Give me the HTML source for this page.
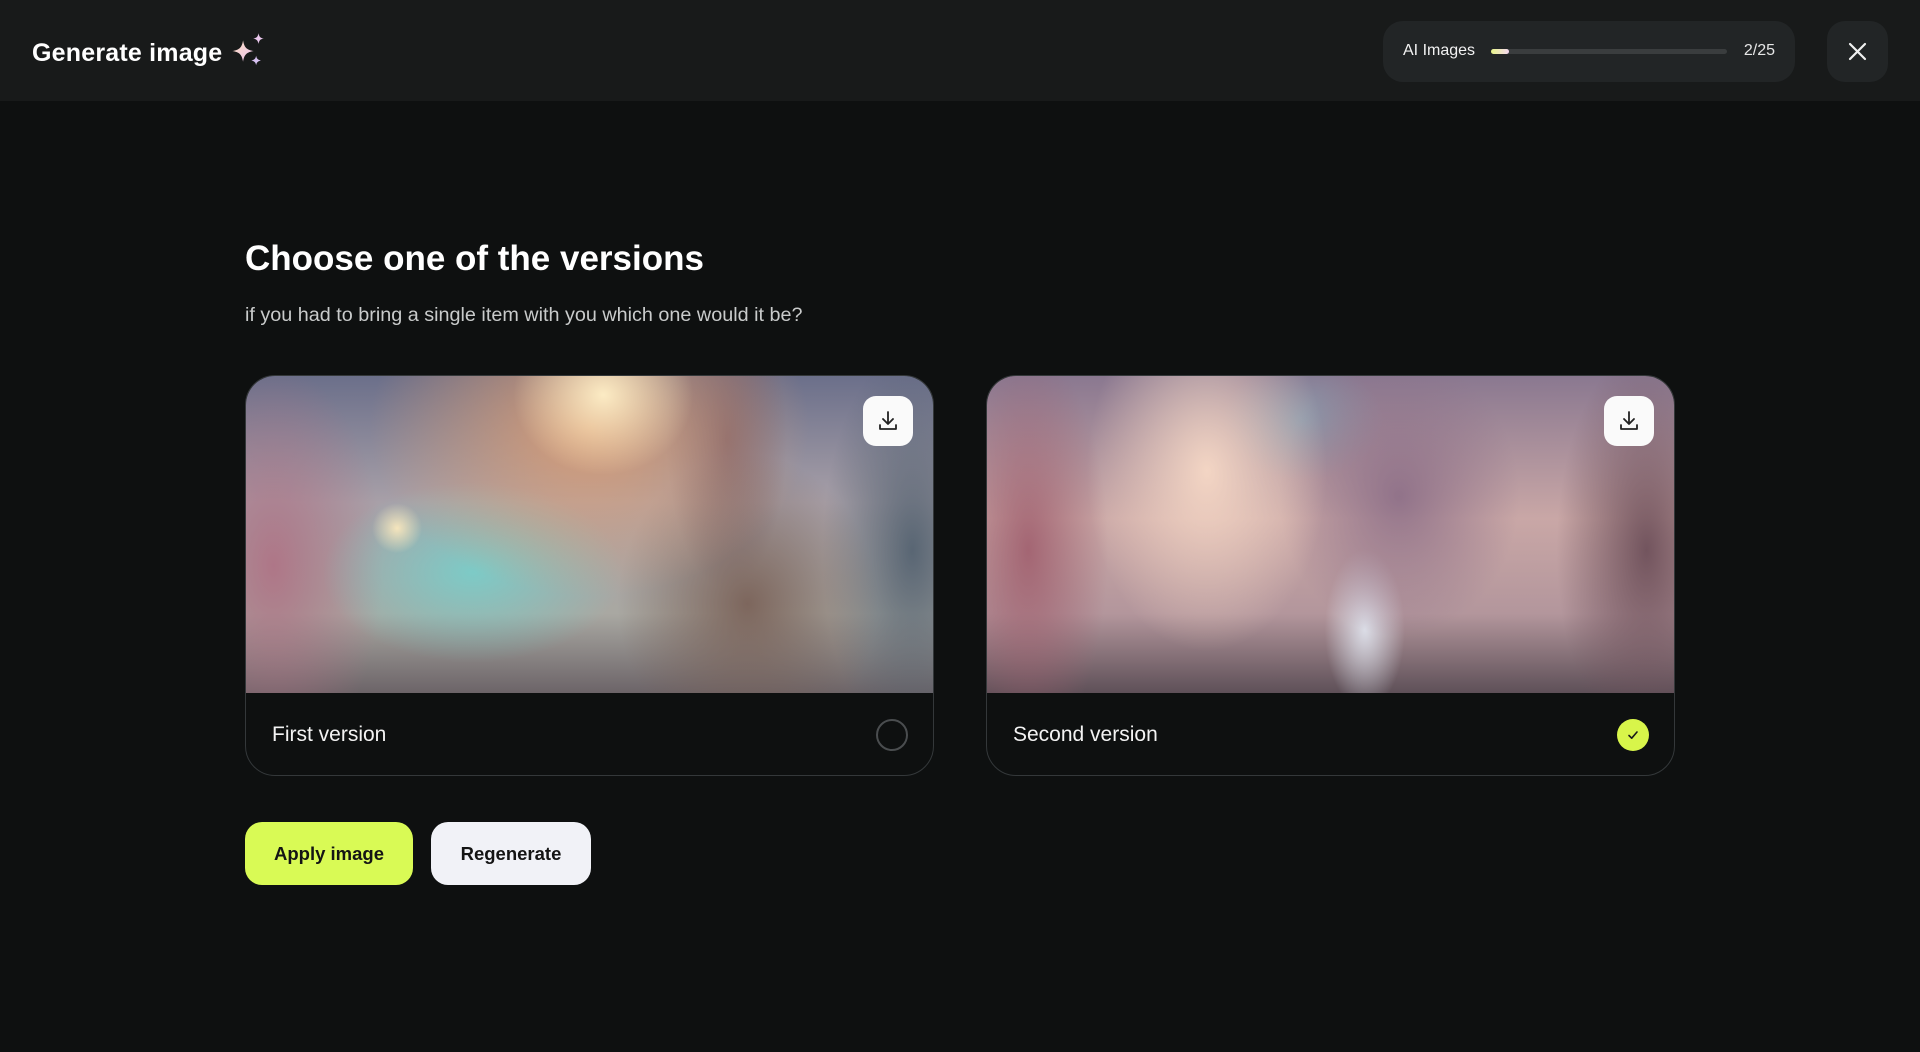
<!DOCTYPE html>
<html><head><meta charset="utf-8">
<style>
*{box-sizing:border-box;margin:0;padding:0}
body{width:1920px;height:1052px;background:#0e1010;font-family:"Liberation Sans",sans-serif;color:#fff;position:relative;overflow:hidden}
.hdr{position:absolute;left:0;top:0;width:1920px;height:101px;background:#181a1a}
.title{position:absolute;left:32px;top:39px;font-size:25px;font-weight:bold;letter-spacing:0.2px}
.spark{position:absolute;left:230px;top:32px}
.pill{position:absolute;left:1383px;top:21px;width:412px;height:61px;border-radius:20px;background:#222526}
.pill .t{position:absolute;left:20px;top:21px;font-size:16px;color:#f2f2f2}
.bar{position:absolute;left:108px;top:28px;width:236px;height:5px;border-radius:3px;background:#3a3d3e}
.bar i{position:absolute;left:0;top:0;width:18px;height:5px;border-radius:3px;background:linear-gradient(90deg,#e8f58a,#f5d8f0)}
.pill .n{position:absolute;right:20px;top:21px;font-size:16px;color:#e6e6e6}
.close{position:absolute;left:1827px;top:21px;width:61px;height:61px;border-radius:18px;background:#222526}
h1{position:absolute;left:245px;top:239px;font-size:35px;font-weight:bold}
.sub{position:absolute;left:245px;top:304px;font-size:19.8px;color:#c9cbcb}
.card{position:absolute;top:375px;width:689px;height:401px;border:1.5px solid #34383a;border-radius:30px;overflow:hidden;background:#0e1010}
.img{position:absolute;left:0;top:0;width:100%;height:317px}
.lbl{position:absolute;left:26px;top:347px;font-size:21px;color:#f3f3f3}
.dl{position:absolute;right:20px;top:20px;width:50px;height:50px;border-radius:13px;background:#fafafa;display:flex;align-items:center;justify-content:center}
.radio{position:absolute;right:25px;top:343px;width:32px;height:32px;border-radius:50%;border:2px solid #4a4d4f}
.chk{position:absolute;right:25px;top:343px;width:32px;height:32px;border-radius:50%;background:#d8f54a;display:flex;align-items:center;justify-content:center}
.btn{position:absolute;top:822px;height:63px;border-radius:17px;font-size:18.5px;font-weight:bold;color:#141414;display:flex;align-items:center;justify-content:center}
</style></head><body>
<div class="hdr">
 <div class="title">Generate image</div>
 <svg class="spark" width="38" height="38" viewBox="0 0 32 32">
  <defs><linearGradient id="g" x1="0" y1="0" x2="1" y2="1"><stop offset="0" stop-color="#ffe0c0"/><stop offset="1" stop-color="#e9c2f0"/></linearGradient></defs>
  <path d="M11 7 C12 13 14 15 20 16 C14 17 12 19 11 25 C10 19 8 17 2 16 C8 15 10 13 11 7Z" fill="url(#g)"/>
  <path d="M24 1 C24.6 4 25.5 5 28.5 5.5 C25.5 6 24.6 7 24 10 C23.4 7 22.5 6 19.5 5.5 C22.5 5 23.4 4 24 1Z" fill="#ebc8ee"/>
  <path d="M22 20 C22.5 22.5 23.3 23.3 26 24 C23.3 24.7 22.5 25.5 22 28 C21.5 25.5 20.7 24.7 18 24 C20.7 23.3 21.5 22.5 22 20Z" fill="#d8c2f2"/>
 </svg>
 <div class="pill"><div class="t">AI Images</div><div class="bar"><i></i></div><div class="n">2/25</div></div>
 <div class="close"><svg width="61" height="61" viewBox="0 0 61 61"><path d="M23 23 L38 38 M38 23 L23 38" stroke="#f0f0f0" stroke-width="2.2" stroke-linecap="round"/></svg></div>
</div>
<h1>Choose one of the versions</h1>
<div class="sub">if you had to bring a single item with you which one would it be?</div>

<div class="card" style="left:245px">
 <div class="img" style="background:
  radial-gradient(ellipse 90px 80px at 52% 6%,rgba(255,240,200,.95),transparent),
  radial-gradient(ellipse 220px 170px at 50% 16%,rgba(230,160,110,.85),transparent),
  radial-gradient(circle 25px at 22% 48%,rgba(255,235,190,.9),transparent),
  radial-gradient(ellipse 150px 90px at 33% 62%,rgba(110,215,210,.75),transparent),
  radial-gradient(ellipse 130px 150px at 73% 72%,rgba(120,95,85,.9),transparent),
  radial-gradient(ellipse 60px 150px at 70% 20%,rgba(110,85,100,.8),transparent),
  radial-gradient(ellipse 110px 200px at 4% 60%,rgba(175,110,130,.85),transparent),
  radial-gradient(ellipse 90px 200px at 97% 55%,rgba(80,95,110,.9),transparent),
  linear-gradient(180deg,#6b6f8a 0%,#a8a0a8 40%,#a9a8a2 75%,#6c6468 100%)"></div>
 <div class="dl"><svg width="24" height="24" viewBox="0 0 24 24" fill="none" stroke="#222" stroke-width="1.8" stroke-linecap="round" stroke-linejoin="round"><path d="M12 3v12M7 10l5 5 5-5M4 16v4h16v-4"/></svg></div>
 <div class="lbl">First version</div>
 <div class="radio"></div>
</div>

<div class="card" style="left:986px">
 <div class="img" style="background:
  radial-gradient(ellipse 120px 180px at 32% 30%,rgba(250,220,200,.9),transparent),
  radial-gradient(ellipse 120px 140px at 60% 38%,rgba(140,110,135,.9),transparent),
  radial-gradient(ellipse 40px 80px at 55% 80%,rgba(225,230,240,.9),transparent),
  radial-gradient(ellipse 80px 200px at 6% 55%,rgba(160,95,110,.9),transparent),
  radial-gradient(ellipse 90px 200px at 96% 55%,rgba(110,80,90,.95),transparent),
  radial-gradient(ellipse 80px 60px at 46% 14%,rgba(120,170,190,.5),transparent),
  linear-gradient(180deg,#8a7890 0%,#c9a7a6 45%,#b3969c 75%,#5e5058 100%)"></div>
 <div class="dl"><svg width="24" height="24" viewBox="0 0 24 24" fill="none" stroke="#222" stroke-width="1.8" stroke-linecap="round" stroke-linejoin="round"><path d="M12 3v12M7 10l5 5 5-5M4 16v4h16v-4"/></svg></div>
 <div class="lbl">Second version</div>
 <div class="chk"><svg width="14" height="14" viewBox="0 0 14 14"><path d="M3 7.5l2.7 2.7L11 4" fill="none" stroke="#1a1a1a" stroke-width="1.6" stroke-linecap="round" stroke-linejoin="round"/></svg></div>
</div>

<div class="btn" style="left:245px;width:168px;background:#d9fa55">Apply image</div>
<div class="btn" style="left:431px;width:160px;background:#f1f2f7">Regenerate</div>
</body></html>
